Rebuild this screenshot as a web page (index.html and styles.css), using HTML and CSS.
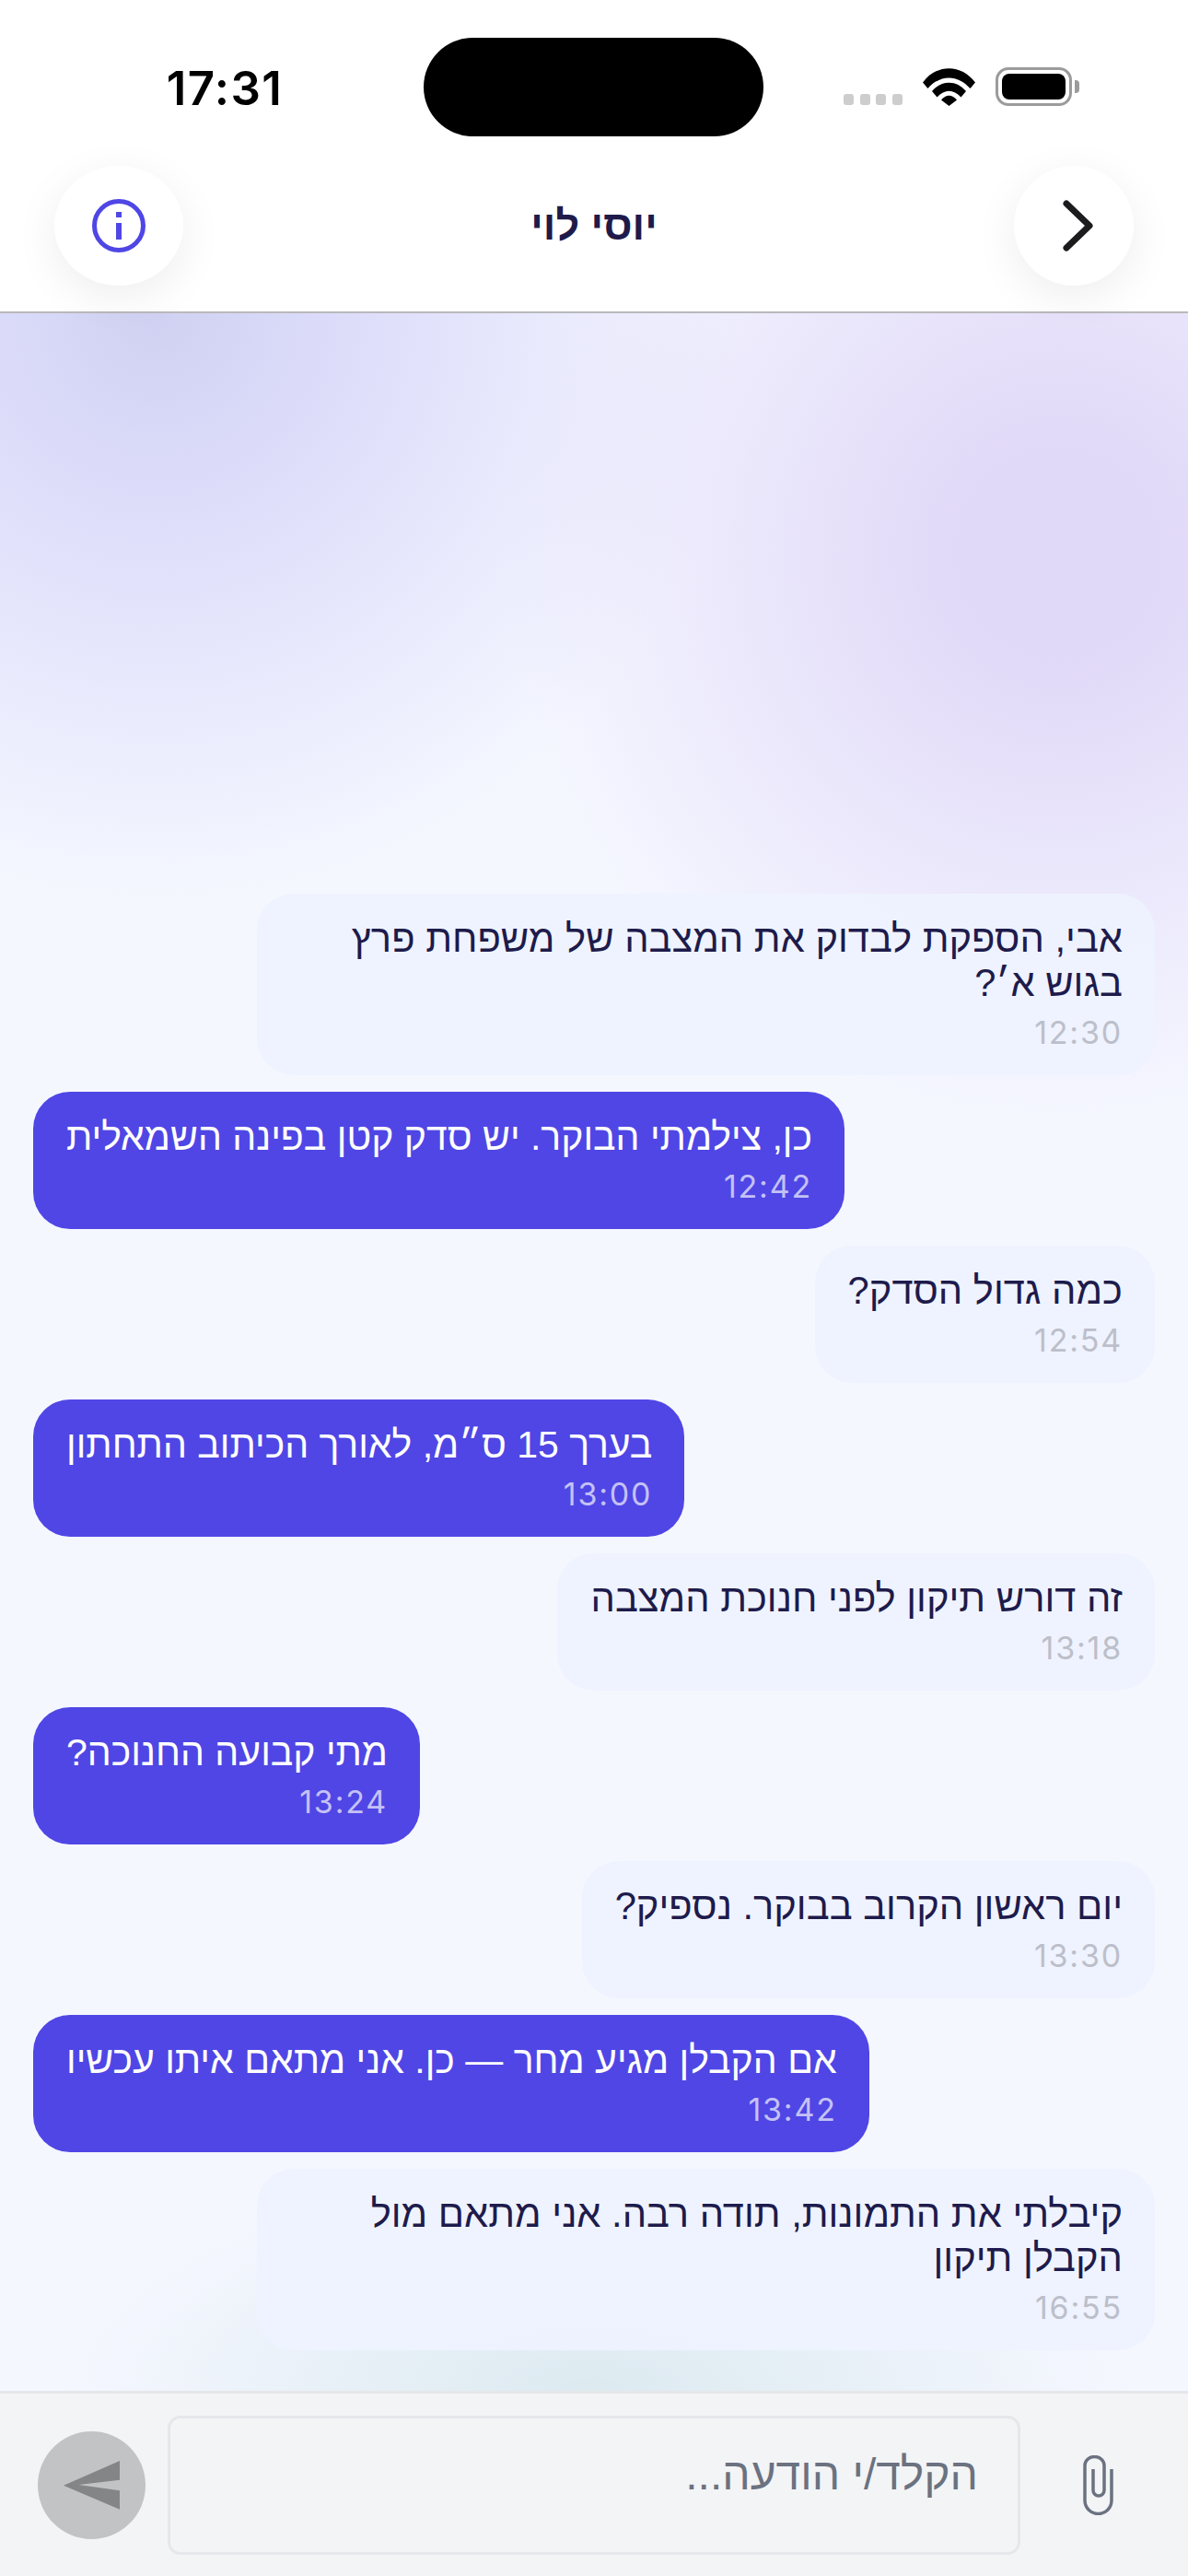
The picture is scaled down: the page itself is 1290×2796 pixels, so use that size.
FILE: index.html
```html
<!DOCTYPE html>
<html lang="he">
<head>
  <meta charset="UTF-8" />
  <meta name="viewport" content="width=device-width, initial-scale=1.0" />
  <title>יוסי לוי</title>
  <link rel="stylesheet" href="styles.css">
</head>
<body>
  <div class="screen">
    <div class="top">
      <div class="status-bar">
        <div class="status-time">17:31</div>
        <div class="notch"></div>
        <div class="status-icons">
          <div class="signal"><span></span><span></span><span></span><span></span></div>
          <svg class="wifi" width="57" height="41" viewBox="0 0 57 41">
            <path d="M0 15.5 C15 -5 42 -5 57 15.5 L51.5 22 C38 6.5 19 6.5 5.5 22 Z" fill="#000"/>
            <path d="M10 25 C20 12.5 37 12.5 47 25 L41.5 31.5 C33 22.5 24 22.5 15.5 31.5 Z" fill="#000"/>
            <path d="M20 34.5 C25 28 32 28 37 34.5 L28.5 41 Z" fill="#000"/>
          </svg>
          <div class="battery"><div class="battery-level"></div></div>
          <div class="battery-cap"></div>
        </div>
      </div>
      <header class="header">
        <div class="header-start">
          <button class="round-btn info-btn">
            <svg width="58" height="58" viewBox="0 0 58 58">
              <circle cx="29" cy="29" r="26.5" fill="none" stroke="#4f46e5" stroke-width="5"/>
              <rect x="26" y="14" width="6" height="6" fill="#4f46e5"/>
              <rect x="26" y="26" width="6" height="18" fill="#4f46e5"/>
            </svg>
          </button>
        </div>
        <h1 class="title">יוסי לוי</h1>
        <div class="header-end">
          <button class="round-btn back-btn">
            <svg width="33" height="56" viewBox="0 0 33 56">
              <path d="M4 4 L29 28 L4 52" fill="none" stroke="#1c1c1e" stroke-width="7" stroke-linecap="round" stroke-linejoin="round"/>
            </svg>
          </button>
        </div>
      </header>
    </div>

    <main class="chat" dir="rtl">
      <div class="msg msg-in">
        <p>אבי, הספקת לבדוק את המצבה של משפחת פרץ בגוש א׳?</p>
        <time>12:30</time>
      </div>
      <div class="msg msg-out">
        <p>כן, צילמתי הבוקר. יש סדק קטן בפינה השמאלית</p>
        <time>12:42</time>
      </div>
      <div class="msg msg-in">
        <p>כמה גדול הסדק?</p>
        <time>12:54</time>
      </div>
      <div class="msg msg-out">
        <p>בערך 15 ס״מ, לאורך הכיתוב התחתון</p>
        <time>13:00</time>
      </div>
      <div class="msg msg-in">
        <p>זה דורש תיקון לפני חנוכת המצבה</p>
        <time>13:18</time>
      </div>
      <div class="msg msg-out">
        <p>מתי קבועה החנוכה?</p>
        <time>13:24</time>
      </div>
      <div class="msg msg-in">
        <p>יום ראשון הקרוב בבוקר. נספיק?</p>
        <time>13:30</time>
      </div>
      <div class="msg msg-out">
        <p>אם הקבלן מגיע מחר — כן. אני מתאם איתו עכשיו</p>
        <time>13:42</time>
      </div>
      <div class="msg msg-in">
        <p>קיבלתי את התמונות, תודה רבה. אני מתאם מול הקבלן תיקון</p>
        <time>16:55</time>
      </div>
    </main>

    <footer class="composer">
      <button class="send-btn">
        <svg width="61" height="53" viewBox="0 0 61 53">
          <path d="M0 26.7 L61 0 V20.7 L16.5 26 L61 32.3 V52.7 Z" fill="#848587"/>
        </svg>
      </button>
      <div class="composer-input" dir="rtl">הקלד/י הודעה...</div>
      <button class="clip-btn">
        <svg width="33" height="65" viewBox="0 0 33 65">
          <path d="M31 15 V49 a14.5 14.5 0 0 1 -29 0 V11 a10.5 9.5 0 0 1 21 0 V38 a6 6 0 0 1 -12 0 V15" fill="none" stroke="#6b7280" stroke-width="3.5"/>
        </svg>
      </button>
    </footer>
  </div>
</body>
</html>
```

FILE: styles.css
```css
* {
  box-sizing: border-box;
}
body {
  margin: 0;
  font-family: 'Liberation Sans', sans-serif;
  background: #fff;
}
button {
  border: none;
  padding: 0;
  display: flex;
  align-items: center;
  justify-content: center;
}
.screen {
  width: 1290px;
  height: 2796px;
  display: flex;
  flex-direction: column;
  overflow: hidden;
}

/* status bar + header */
.top {
  height: 340px;
  background: #fff;
  border-bottom: 2px solid #b9b9bd;
  flex-shrink: 0;
  position: relative;
  z-index: 1;
}
.status-bar {
  height: 180px;
  padding-top: 41px;
  display: flex;
  align-items: flex-start;
}
.status-time {
  width: 460px;
  padding: 24px 0 0 28px;
  text-align: center;
  font-family: Inter, sans-serif;
  font-size: 51px;
  font-weight: 600;
  line-height: 62px;
  letter-spacing: 1.4px;
  color: #000;
}
.notch {
  width: 369px;
  height: 107px;
  background: #000;
  border-radius: 54px;
}
.status-icons {
  display: flex;
  align-items: flex-end;
  padding: 32px 0 0 87px;
}
.signal {
  display: flex;
  gap: 6.5px;
  margin-right: 22px;
  padding-bottom: 1px;
}
.signal span {
  width: 11px;
  height: 12px;
  border-radius: 3px;
  background: #cdcdcd;
}
.wifi {
  margin-right: 22px;
}
.battery {
  width: 83px;
  height: 42px;
  border: 3px solid #9b9b9b;
  border-radius: 14px;
  padding: 4px;
}
.battery-level {
  height: 100%;
  background: #000;
  border-radius: 8px;
}
.battery-cap {
  width: 5px;
  height: 14px;
  margin: 0 0 14px 3px;
  background: #9b9b9b;
  border-radius: 0 4px 4px 0;
}
.header {
  display: grid;
  grid-template-columns: 1fr auto 1fr;
  align-items: center;
  padding: 0 59px;
}
.header-end {
  display: flex;
  justify-content: flex-end;
}
.title {
  margin: 0;
  font-size: 45px;
  font-weight: 700;
  color: #1e1b4b;
}
.round-btn {
  height: 130px;
  border-radius: 50%;
  background: #fff;
  box-shadow: 0 12px 48px rgba(0, 0, 0, 0.07);
}
.info-btn {
  width: 140px;
}
.back-btn {
  width: 130px;
  padding-left: 8px;
}

/* messages */
.chat {
  flex: 1;
  display: flex;
  flex-direction: column;
  justify-content: flex-end;
  align-items: flex-start;
  gap: 18px;
  padding: 0 36px 44px;
  background:
    radial-gradient(ellipse 580px 240px at 645px 100%, #dceaf0 0%, rgba(220, 234, 240, 0) 100%),
    radial-gradient(ellipse 600px 620px at 1150px 260px, #e1d9f8 0%, #e1d9f8 18%, rgba(225, 217, 248, 0) 100%),
    radial-gradient(ellipse 640px 640px at 170px 0, #d0d1f2 0%, #dcdcfa 30%, rgba(220, 220, 250, 0) 100%),
    #f5f7ff;
}
.msg {
  max-width: 975px;
  padding: 25px 35px 26px 36px;
  border-radius: 40px;
  display: flex;
  flex-direction: column;
}
.msg p {
  margin: 0;
  font-size: 41.7px;
  line-height: 48px;
}
.msg time {
  margin-top: 10px;
  font-family: Inter, sans-serif;
  font-size: 34px;
  line-height: 40px;
  letter-spacing: 1.8px;
}
.msg-in {
  background: rgba(238, 242, 255, 0.95);
  color: #1e1b4b;
}
.msg-in time {
  color: #bcbfca;
}
.msg-out {
  align-self: flex-end;
  background: #4f46e5;
  color: #fff;
}
.msg-out p {
  font-size: 41px;
}
.msg-out time {
  color: #c4c1f6;
}

/* composer */
.composer {
  height: 201px;
  flex-shrink: 0;
  background: #f3f4f6;
  border-top: 3px solid #e5e7eb;
  display: flex;
  align-items: center;
  padding: 0 81px 0 41px;
}
.send-btn {
  width: 117px;
  height: 117px;
  border-radius: 50%;
  background: #c2c3c5;
  margin-right: 24px;
}
.composer-input {
  flex: 1;
  height: 151px;
  border: 3px solid #e5e7eb;
  border-radius: 14px;
  padding: 0 43px 24px;
  display: flex;
  align-items: center;
  font-size: 48px;
  color: #6b7280;
  margin-right: 68px;
}
.clip-btn {
  background: none;
  width: 33px;
}
```
